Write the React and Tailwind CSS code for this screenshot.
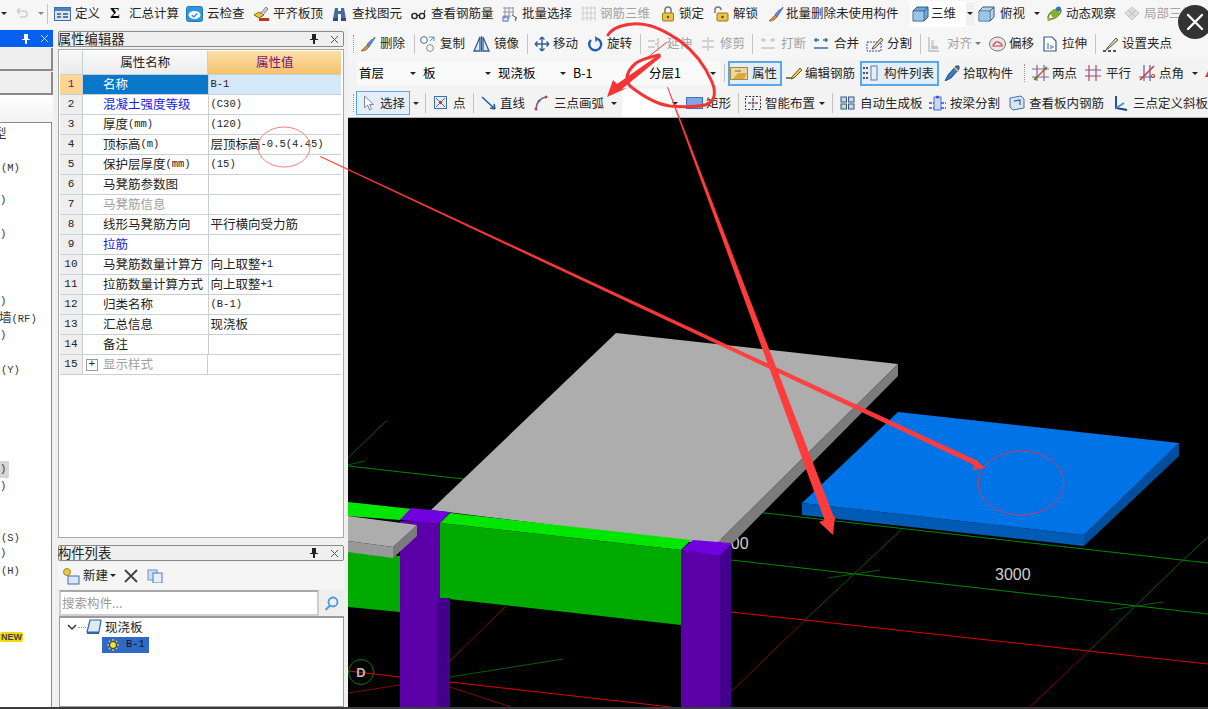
import React from "react";

const Ic = ({ children, w = 16, h = 16 }) => (
  <svg width={w} height={h} viewBox={`0 0 ${w} ${h}`} fill="none" className="block shrink-0">{children}</svg>
);
const Caret = ({ cls = "" }) => <span className={`shrink-0 w-0 h-0 border-l-[3px] border-r-[3px] border-t-[3px] border-l-transparent border-r-transparent border-t-[#222] ${cls}`} />;
const Sep = ({ w }) => <div className={`shrink-0 flex justify-start ${w}`}><div className="w-px h-[20px] bg-[#c4c4c4]" /></div>;
const Grip = ({ w }) => <div className={`shrink-0 ${w} h-[18px] border-l border-dotted border-[#999]`} />;

const T = ({ w, o, icon, label, gray, children }) => (
  <div className={`flex items-center shrink-0 whitespace-nowrap ${w}`}>
    <span className={`flex shrink-0 ${o}`}>{icon}</span>
    <span className={gray ? "text-[#a3a3a3]" : "text-[#262626]"}>{label}</span>
    {children}
  </div>
);

/* icons */
const Form = () => <Ic w={17}><rect x=".5" y="1.5" width="16" height="13" fill="#dbe6f2" stroke="#3f6fa8" /><rect x="1" y="2" width="15" height="3" fill="#4f83bd" /><path d="M3 8h4M9 8h5M3 11h4M9 11h5" stroke="#35557a" strokeWidth="1.6" /></Ic>;
const CloudChk = () => <Ic w={17}><rect x=".5" y=".5" width="16" height="15" rx="2" fill="#2f97dc" stroke="#1c78bb" /><ellipse cx="8.5" cy="9" rx="6" ry="4" fill="#fff" /><path d="M5.8 9l2 2 3.4-3.6" stroke="#2f97dc" strokeWidth="1.4" /></Ic>;
const Align = () => <Ic w={17}><path d="M1 9l5-3 5 3-5 3z" fill="#e9c23f" stroke="#8a6d10" /><path d="M8 7l5-6 2 2-5 6z" fill="#c9d3df" stroke="#77828f" /><rect x="6" y="12" width="10" height="3" fill="#b83a1d" /></Ic>;
const Binoc = () => <Ic w={17}><path d="M4 2h3v3h3V2h3l2 11h-5V8H7v5H2z" fill="#456c9e" /><rect x="2" y="12" width="5" height="3" fill="#2f4f7a" /><rect x="10" y="12" width="5" height="3" fill="#2f4f7a" /></Ic>;
const Glass = () => <Ic w={17}><circle cx="4.5" cy="10" r="2.6" stroke="#222" strokeWidth="1.4" /><circle cx="12" cy="10" r="2.6" stroke="#222" strokeWidth="1.4" /><path d="M7 9.5h2.5M14 8l1-4" stroke="#222" /></Ic>;
const Batch = () => <Ic w={17}><path d="M1 2h11M1 6h11M1 10h8M3 1v12M7 1v12M11 1v8" stroke="#8c96a6" /><rect x="1" y="11" width="5" height="4" stroke="#3c6fc4" /><path d="M10 9l5 3-2 1 1 2" stroke="#555" /></Ic>;
const Rebar3 = () => <Ic w={17}><path d="M1 2h15M1 7h15M1 12h15M3 0v15M7 0v15M11 0v15M15 0v15" stroke="#cfcfcf" /></Ic>;
const Lock = ({ open }) => <Ic><path d={open ? "M2 7V4a3 3 0 0 1 6 0" : "M5 7V4a3 3 0 0 1 6 0v3"} stroke="#777" strokeWidth="1.5" /><rect x={open ? 4 : 2.5} y="7" width="11" height="8" rx="1" fill="#e8c24a" stroke="#9b7b16" /><circle cx={open ? 9.5 : 8} cy="11" r="1.2" fill="#5a4508" /></Ic>;
const Brush = () => <Ic><path d="M15 1L7 9l2 2 6-9z" fill="#4b8fd6" stroke="#2b5f9c" strokeWidth=".6" /><path d="M7 9l2 2-3 3c-2 1-4 1-5 1 1-1 2-2 3-3z" fill="#cf8e48" stroke="#7a4f20" strokeWidth=".6" /><path d="M12 3l-5 5" stroke="#d46ad4" /></Ic>;
const Cube = ({ tint = "#6ea9d6" }) => <Ic w={17}><path d="M1 5l4-4h11v10l-4 4H1z" fill={tint} stroke="#2d5c85" /><path d="M1 5h11v10M12 5l4-4" stroke="#2d5c85" /><rect x="1.5" y="5.5" width="10" height="9" fill="#9dc6e6" /></Ic>;
const Orbit = () => <Ic w={17}><ellipse cx="8.5" cy="8" rx="7.5" ry="3.4" transform="rotate(-35 8.5 8)" stroke="#5d8a22" strokeWidth="1.5" /><circle cx="9" cy="7.5" r="4.2" fill="#7fb32e" /><circle cx="12.5" cy="3" r="2.5" fill="#3a6fc4" /><circle cx="3" cy="13.5" r="1.7" fill="#c2a52e" /></Ic>;
const Parts = () => <Ic w={17} ><path d="M8 1l7 6-7 7-7-7z" fill="#ddd" stroke="#c6c6c6" /><path d="M4.5 4l7 7M11.5 4l-7 7" stroke="#bbb" /></Ic>;
const Dup = () => <Ic w={17}><circle cx="5" cy="4" r="3.4" stroke="#4a6f9a" /><circle cx="11" cy="12" r="3.4" stroke="#8a8a8a" /><path d="M10 1l5 0v4M15 1l-4 4" stroke="#4a8fd6" /></Ic>;
const Mirror = () => <Ic w={17}><path d="M7 1L1 15h6zM10 1l6 14h-6z" stroke="#2f5f93" strokeWidth="1.3" fill="#dfe9f4" /><path d="M8.5 0v16" stroke="#555" /></Ic>;
const Move = () => <Ic><path d="M8 1v14M1 8h14M8 1L5.5 3.5M8 1l2.5 2.5M8 15l-2.5-2.5M8 15l2.5-2.5M1 8l2.5-2.5M1 8l2.5 2.5M15 8l-2.5-2.5M15 8l-2.5 2.5" stroke="#2b5f9c" strokeWidth="1.4" /></Ic>;
const Rot = () => <Ic><path d="M4 4a6 6 0 1 0 7-1" stroke="#1f5fb5" strokeWidth="2.4" /><path d="M8 0l4 3-3.5 3z" fill="#1f5fb5" /></Ic>;
const Ext = () => <Ic><path d="M1 5h7M1 11h7M11 2v12M8 8h3" stroke="#c5c5c5" strokeWidth="1.4" /></Ic>;
const Trim = () => <Ic><path d="M2 5h5M2 11h5M9 5h5M9 11h5M8 1v14" stroke="#c5c5c5" strokeWidth="1.4" /></Ic>;
const Brk = () => <Ic><path d="M1 4h5M10 4h5M1 12h14M3 2v4M13 2v4" stroke="#c5c5c5" strokeWidth="1.4" /></Ic>;
const Merge = () => <Ic><path d="M1 4h5M10 4h5M1 12h14M3 2v4M13 2v4" stroke="#2f6fb5" strokeWidth="1.4" /></Ic>;
const Split = () => <Ic w={17}><rect x="1" y="6" width="14" height="9" stroke="#2f4fd6" strokeDasharray="2 1" /><path d="M7 11l8-9 2 2-8 8-3 1z" fill="#e8d7a0" stroke="#555" /></Ic>;
const AlignL = () => <Ic w={12}><path d="M1 1v14h10" stroke="#bdbdbd" strokeWidth="1.4" /><rect x="3" y="4" width="3" height="8" fill="#d5d5d5" /><rect x="3" y="10" width="7" height="3" fill="#c5c5c5" /></Ic>;
const Offs = () => <Ic w={17}><ellipse cx="8.5" cy="8" rx="8" ry="7" fill="#e6e6e6" stroke="#777" /><path d="M4 10c0-3 2-2 3-4 2-1 3 1 4 1s2 2 2 3z" stroke="#d43b3b" strokeWidth="1.2" /></Ic>;
const Stretch = () => <Ic w={17}><path d="M2 1h8l4 4v10H2z" fill="#fff" stroke="#2f5f93" strokeWidth="1.2" /><path d="M6 7v6M9 9v4M12 11h-2" stroke="#2f5f93" /></Ic>;
const Pick = () => <Ic><path d="M14 2l-8 9-2 3 3-2 9-8z" fill="#e8d9a0" stroke="#555" /><path d="M1 15h3M6 15h3M11 15h3" stroke="#222" strokeWidth="1.5" /></Ic>;
const Prop = () => <Ic w={18}><rect x=".5" y="2.5" width="17" height="12" fill="#f0d79b" stroke="#a98b3f" /><path d="M3 14l5-6h9l-3 6z" fill="#d9a93e" /><path d="M5 6h6" stroke="#666" /></Ic>;
const Edit = () => <Ic w={17}><path d="M1 13h6" stroke="#555" strokeWidth="1.5" /><path d="M7 12l8-9 2 2-8 8-3 1z" fill="#eec94e" stroke="#6b5a1f" /></Ic>;
const List = () => <Ic w={16}><rect x="9" y="1" width="6" height="14" fill="#e6eef7" stroke="#5a7fa8" /><path d="M1 3h5M1 8h5M1 13h5" stroke="#555" strokeWidth="2" strokeDasharray="2 1" /></Ic>;
const Drop = () => <Ic w={17}><path d="M15 1l-3 0-8 9-3 6 6-3 8-9z" fill="#3b79c9" stroke="#234a85" /><path d="M10 2l5 5" stroke="#e8c24a" strokeWidth="1.5" /></Ic>;
const Two = () => <Ic w={17}><path d="M5 0v16M12 0v16M0 4h17M0 12h17" stroke="#7b6b9a" strokeWidth="1.2" /><path d="M2 15L15 2" stroke="#d43b3b" strokeWidth="1.2" /><circle cx="3.5" cy="13.5" r="1.5" fill="#2ea043" /><circle cx="13.5" cy="3.5" r="1.5" fill="#2ea043" /></Ic>;
const Para = () => <Ic w={16}><path d="M4 0v16M11 0v16" stroke="#c04a4a" strokeWidth="1.2" /><path d="M0 5h16M0 11h16" stroke="#6b5a9a" strokeWidth="1.2" /></Ic>;
const Ang = () => <Ic w={16}><path d="M5 0v16M11 0v16M0 12h16" stroke="#6b5a9a" strokeWidth="1.2" /><path d="M1 15L15 1" stroke="#d43b3b" strokeWidth="1.6" /><circle cx="14" cy="11" r="1.6" stroke="#d43b3b" /></Ic>;
const Cur = () => <Ic w={11}><path d="M1.5 1v12l3-3 2 5 2-1-2-4.500h4z" fill="#fff" stroke="#7d8a99" /></Ic>;
const Pt = () => <Ic w={13}><rect x=".5" y="1.500" width="12" height="12" fill="#e8eef6" stroke="#3f6fa8" /><path d="M2 3l9 9M11 3l-9 9" stroke="#3f6fa8" /><circle cx="6.500" cy="7.500" r="1.800" fill="#d43b3b" /></Ic>;
const Ln = () => <Ic><path d="M1 2l13 12M14 14l-5-1M14 14l-1-5" stroke="#2b5f9c" strokeWidth="1.6" /></Ic>;
const Arc = () => <Ic w={14}><path d="M2 14C2 8 6 3 12 2" stroke="#3f6fa8" strokeWidth="1.6" /><circle cx="2" cy="14" r="1.500" fill="#d43b3b" /><circle cx="12" cy="2" r="1.500" fill="#d43b3b" /><circle cx="5" cy="6" r="1.300" fill="#d43b3b" /></Ic>;
const Rect = () => <Ic w={17}><rect x=".5" y="2.500" width="16" height="11" fill="#7ea7e6" stroke="#3f6fc4" /></Ic>;
const Smart = () => <Ic w={17}><rect x=".5" y="1.500" width="15" height="13" stroke="#333" strokeDasharray="2 1.500" /><path d="M8 3v3M8 10v3M3 8h3M10 8h3" stroke="#3f6fa8" strokeWidth="1.500" /><circle cx="8" cy="8" r="1.500" fill="#d43b3b" /></Ic>;
const Auto = () => <Ic w={15}><rect x="1" y="2" width="5.500" height="5" fill="#c8d8ea" stroke="#34567d" /><rect x="8.500" y="2" width="5.500" height="5" fill="#c8d8ea" stroke="#34567d" /><rect x="1" y="9" width="5.500" height="5" fill="#c8d8ea" stroke="#34567d" /><rect x="8.500" y="9" width="5.500" height="5" fill="#c8d8ea" stroke="#34567d" /></Ic>;
const Beam = () => <Ic w={17}><path d="M0 8h17M0 13h17" stroke="#2f4fd6" strokeWidth="1.300" strokeDasharray="3 1" /><rect x="5" y="2" width="7" height="13" fill="#c8d8f2" stroke="#2f4fd6" strokeWidth=".8" /><circle cx="8.500" cy="2" r="1.500" fill="#2f4fd6" /></Ic>;
const View = () => <Ic w={16}><path d="M1 3l11-2 3 3v9l-11 2-3-3z" fill="#d7e5f2" stroke="#3f6fa8" /><path d="M5 6l6-1v5" stroke="#3f6fa8" strokeWidth="1.300" /></Ic>;
const Slope = () => <Ic w={15}><path d="M2 1v12l11 2" stroke="#173f8a" strokeWidth="1.800" /><path d="M2 13l8-5" stroke="#3b8fd6" strokeWidth="1.500" /></Ic>;

const Combo = ({ w, t, pl }) => (
  <div className={`flex items-center h-[24px] shrink-0 ${w}`}>
    <div className={`flex-1 h-full flex items-center ${pl}`}>{t}</div>
    <div className="w-[15px] h-full flex items-center justify-center"><Caret /></div>
  </div>
);

const Btn = ({ w, children }) => (
  <div className={`flex items-center shrink-0 h-[25px] border-2 border-[#5aa6e6] bg-[#e2eff9] ${w}`}>{children}</div>
);

const TopBar = () => (
  <div className="flex items-center h-[29px] pb-[2px] bg-[#f6f6f6] text-[12.5px] shrink-0">
    <div className="w-[14px] pl-[1px] flex"><Caret /></div>
    <div className="w-[22px] flex"><Ic w={14}><path d="M3 5h7a3 3 0 0 1 0 6H6M3 5l3-3M3 5l3 3" stroke="#cfcfcf" strokeWidth="1.500" /></Ic></div>
    <div className="w-[11px] pl-[2px] flex"><Caret cls="border-t-[#888]" /></div>
    <Sep w="w-[7px]" />
    <T w="w-[56px]" o="w-[21px]" icon={<Form />} label="定义" />
    <T w="w-[76px]" o="w-[19px]" icon={<span className="font-bold text-[15px] leading-none font-['Liberation_Serif',serif]">Σ</span>} label="汇总计算" />
    <T w="w-[67px]" o="w-[21px]" icon={<CloudChk />} label="云检查" />
    <T w="w-[78px]" o="w-[20px]" icon={<Align />} label="平齐板顶" />
    <T w="w-[79px]" o="w-[21px]" icon={<Binoc />} label="查找图元" />
    <T w="w-[92px]" o="w-[21px]" icon={<Glass />} label="查看钢筋量" />
    <T w="w-[78px]" o="w-[20px]" icon={<Batch />} label="批量选择" />
    <T w="w-[80px]" o="w-[20px]" icon={<Rebar3 />} label="钢筋三维" gray />
    <T w="w-[53px]" o="w-[19px]" icon={<Lock />} label="锁定" />
    <T w="w-[55px]" o="w-[20px]" icon={<Lock open />} label="解锁" />
    <T w="w-[142px]" o="w-[18px]" icon={<Brush />} label="批量删除未使用构件" />
    <div className="flex items-center w-[64px] h-[26px] bg-white shrink-0 pl-[2px]">
      <T w="w-[62px]" o="w-[19px]" icon={<Cube />} label="三维"><div className="ml-[10px] flex items-center justify-center w-[12px] h-[24px] bg-[#f0f0f0]"><Caret /></div></T>
    </div>
    <div className="w-[4px] shrink-0" />
    <T w="w-[68px]" o="w-[22px]" icon={<Cube tint="#b7d2e8" />} label="俯视"><Caret cls="ml-[9px]" /></T>
    <T w="w-[78px]" o="w-[20px]" icon={<Orbit />} label="动态观察" />
    <T w="w-[84px]" o="w-[20px]" icon={<Parts />} label="局部三维" gray />
  </div>
);

const Row2 = () => (
  <div className="flex items-center h-[31px] pl-[5px] pb-[2px] bg-[#f6f6f6] text-[12.5px] shrink-0">
    <Grip w="w-[7px]" />
    <T w="w-[54px]" o="w-[20px]" icon={<Brush />} label="删除" />
    <Sep w="w-[5px]" />
    <T w="w-[54px]" o="w-[21px]" icon={<Dup />} label="复制" />
    <T w="w-[54px]" o="w-[21px]" icon={<Mirror />} label="镜像" />
    <Sep w="w-[7px]" />
    <T w="w-[53px]" o="w-[19px]" icon={<Move />} label="移动" />
    <T w="w-[53px]" o="w-[20px]" icon={<Rot />} label="旋转" />
    <Sep w="w-[7px]" />
    <T w="w-[53px]" o="w-[20px]" icon={<Ext />} label="延伸" gray />
    <T w="w-[52px]" o="w-[20px]" icon={<Trim />} label="修剪" gray />
    <Sep w="w-[8px]" />
    <T w="w-[53px]" o="w-[21px]" icon={<Brk />} label="打断" gray />
    <T w="w-[53px]" o="w-[21px]" icon={<Merge />} label="合并" />
    <T w="w-[54px]" o="w-[21px]" icon={<Split />} label="分割" />
    <Sep w="w-[8px]" />
    <T w="w-[61px]" o="w-[19px]" icon={<AlignL />} label="对齐" gray><Caret cls="ml-[3px] border-t-[#777]" /></T>
    <T w="w-[53px]" o="w-[20px]" icon={<Offs />} label="偏移" />
    <T w="w-[53px]" o="w-[20px]" icon={<Stretch />} label="拉伸" />
    <Sep w="w-[7px]" />
    <T w="w-[76px]" o="w-[20px]" icon={<Pick />} label="设置夹点" />
  </div>
);

const Row3 = () => (
  <div className="flex items-center h-[29px] pl-[9px] pb-[3px] bg-[#f3f3f3] text-[12.5px] shrink-0">
    <div className="flex items-center bg-[#fafafa]">
      <Combo w="w-[63px]" t="首层" pl="pl-[2px]" />
      <Combo w="w-[75px]" t="板" pl="pl-[3px]" />
      <Combo w="w-[75px]" t="现浇板" pl="pl-[3px]" />
      <Combo w="w-[75px]" t="B-1" pl="pl-[3px]" />
      <Combo w="w-[75px]" t="分层1" pl="pl-[4px]" />
    </div>
    <div className="w-[8px] shrink-0 flex justify-start pl-[4px]"><div className="w-px h-[18px] bg-[#c4c4c4]" /></div>
    <Btn w="w-[54px]"><T w="w-[50px]" o="w-[22px]" icon={<Prop />} label="属性" /></Btn>
    <div className="w-[3px] shrink-0" />
    <T w="w-[75px]" o="w-[20px]" icon={<Edit />} label="编辑钢筋" />
    <Btn w="w-[79px]"><T w="w-[75px]" o="w-[22px]" icon={<List />} label="构件列表" /></Btn>
    <div className="w-[5px] shrink-0" />
    <T w="w-[75px]" o="w-[19px]" icon={<Drop />} label="拾取构件" />
    <div className="w-[13px] shrink-0 flex"><div className="ml-[5px] h-[18px] border-l border-dotted border-[#999]" /></div>
    <T w="w-[53px]" o="w-[20px]" icon={<Two />} label="两点" />
    <T w="w-[54px]" o="w-[21px]" icon={<Para />} label="平行" />
    <T w="w-[65px]" o="w-[20px]" icon={<Ang />} label="点角"><Caret cls="ml-[8px]" /></T>
    <Ic w={6}><path d="M1 12l4-8v8z" fill="#d43b3b" /></Ic>
  </div>
);

const Row4 = () => (
  <div className="flex items-center h-[28px] pl-[5px] bg-[#f3f3f3] text-[12.5px] shrink-0">
    <div className="w-[3px] shrink-0 h-[18px] border-l border-dotted border-[#999]" />
    <div className="flex items-center shrink-0 w-[54px] h-[24px] border border-[#5aa6e6] bg-[#e2eff9]">
      <T w="w-[52px]" o="w-[23px] pl-[6px]" icon={<Cur />} label="选择" />
    </div>
    <div className="w-[15px] shrink-0 pl-[3px] flex"><Caret /></div>
    <Sep w="w-[9px]" />
    <T w="w-[39px]" o="w-[19px]" icon={<Pt />} label="点" />
    <Sep w="w-[8px]" />
    <T w="w-[53px]" o="w-[19px]" icon={<Ln />} label="直线" />
    <T w="w-[88px]" o="w-[20px]" icon={<Arc />} label="三点画弧"><Caret cls="ml-[7px]" /></T>
    <div className="w-[50px] h-full bg-white shrink-0" />
    <div className="w-[14px] shrink-0 flex"><Caret /></div>
    <T w="w-[52px]" o="w-[20px]" icon={<Rect />} label="矩形" />
    <Sep w="w-[7px]" />
    <T w="w-[87px]" o="w-[20px]" icon={<Smart />} label="智能布置"><Caret cls="ml-[4px]" /></T>
    <Sep w="w-[8px]" />
    <T w="w-[89px]" o="w-[20px]" icon={<Auto />} label="自动生成板" />
    <T w="w-[80px]" o="w-[21px]" icon={<Beam />} label="按梁分割" />
    <T w="w-[105px]" o="w-[20px]" icon={<View />} label="查看板内钢筋" />
    <T w="w-[94px]" o="w-[19px]" icon={<Slope />} label="三点定义斜板" />
  </div>
);

const Scene = () => (
  <svg className="block w-full h-full bg-black" viewBox="348 118 860 589" preserveAspectRatio="none">
    {/* grid */}
    <g fill="none" strokeWidth="1">
      <path d="M348 466L1208 563M731 560L1208 614" stroke="#008a00" />
      <path d="M348 458L386 421M348 465L365 461M450 677L563 659M805 620L903 528M1088 652L1183 560L1208 537M828 578L880 570M1109 610L1163 602" stroke="#0b5c0b" />
      <path d="M731 612L1208 664M348 671L400 677M450 682L671 707" stroke="#e00000" />
      <path d="M348 693L400 685M450 687L511 707M450 661L506 606M731 692L805 620M1088 652L1030 707" stroke="#7a0a0a" />
    </g>
    <text x="713" y="549" fill="#cfcfcf" fontSize="16" fontFamily="Liberation Sans, sans-serif">3000</text>
    <text x="995" y="580" fill="#cfcfcf" fontSize="16" fontFamily="Liberation Sans, sans-serif">3000</text>
    {/* grey slab */}
    <polygon points="616,333 898,364 715,545 431,510" fill="#adadad" />
    <polygon points="898,364 898,376 731,545 715,545" fill="#7c7c7c" />
    {/* right beam */}
    <polygon points="450,513 691,540 681,550 440,523" fill="#00e600" />
    <polygon points="440,523 681,550 681,625 440,598" fill="#00aa00" />
    {/* left beam */}
    <polygon points="348,502 412,509 400,520 348,516" fill="#00e600" />
    <polygon points="348,550 400,556 400,612 348,607" fill="#00aa00" />
    {/* column 1 */}
    <rect x="400" y="521" width="38" height="186" fill="#5b00a8" />
    <rect x="437" y="523" width="3" height="75" fill="#5b00a8" />
    <rect x="437" y="598" width="13" height="109" fill="#43008c" />
    <polygon points="400,520 411,508 450,512 440,523" fill="#7000e0" />
    {/* small grey slab, in front of column 1 */}
    <polygon points="348,516 417,525 393,547 348,541" fill="#adadad" />
    <polygon points="348,541 393,547 393,558 348,552" fill="#999" />
    <polygon points="393,547 417,525 417,536 393,558" fill="#7c7c7c" />
    {/* column 2 */}
    <polygon points="681,550 720,556 720,707 681,707" fill="#5b00a8" />
    <polygon points="720,556 731,543 731,707 720,707" fill="#43008c" />
    <polygon points="681,550 693,540 731,543 720,556" fill="#7000e0" />
    {/* blue slab */}
    <polygon points="898,412 1179,443 1084,535 802,503" fill="#0073e6" />
    <polygon points="802,503 1084,535 1084,546 802,515" fill="#005bb5" />
    <polygon points="1179,443 1179,456 1084,546 1084,535" fill="#004f9f" />
    {/* axis bubble */}
    <circle cx="361" cy="672" r="12.500" fill="none" stroke="#0b7a0b" />
    <text x="361" y="677" textAnchor="middle" fill="#bbb" fontSize="13" fontWeight="bold" fontFamily="Liberation Sans, sans-serif">D</text>
  </svg>
);

function M({ children }) {
  return <span className="font-['Liberation_Mono',monospace] text-[10.5px]">{children}</span>;
}

const rows = [
  ["名称", <M>B-1</M>],
  ["混凝土强度等级", <M>(C30)</M>, "b"],
  [<>厚度<M>(mm)</M></>, <M>(120)</M>],
  [<>顶标高<M>(m)</M></>, <>层顶标高<M>-0.5(4.45)</M></>],
  [<>保护层厚度<M>(mm)</M></>, <M>(15)</M>],
  ["马凳筋参数图", ""],
  ["马凳筋信息", "", "g"],
  ["线形马凳筋方向", "平行横向受力筋"],
  ["拉筋", "", "b"],
  ["马凳筋数量计算方", <>向上取整<M>+1</M></>],
  ["拉筋数量计算方式", <>向上取整<M>+1</M></>],
  ["归类名称", <M>(B-1)</M>],
  ["汇总信息", "现浇板"],
  ["备注", ""],
  ["显示样式", "", "g"],
];

const PanelTitle = ({ t }) => (
  <div className="flex items-center h-[16px] bg-[#efefef] border border-[#8a8a8a] rounded-[2px] text-[13.3px] leading-none text-[#222] pr-[4px]">
    <span className="flex-1 -ml-[1px]">{t}</span>
    <Ic w={10} h={12}><path d="M3 1h4v5h2v1H6v4H4V7H1V6h2z" fill="#222" /></Ic>
    <span className="ml-[11px]"><Ic w={9} h={9}><path d="M1 1l7 7M8 1L1 8" stroke="#555" /></Ic></span>
  </div>
);

const PropTable = () => (
  <div className="flex-1 bg-white border border-[#a8a8a8] mt-[2px] p-[1px] pr-[2px] min-h-0">
    <div className="flex h-[24px] text-[12.5px] border-b border-[#c8d0d4]">
      <div className="w-[23px] bg-gradient-to-b from-[#f8f8f8] to-[#e9e9e9] border-r border-[#c8d0d4]" />
      <div className="w-[126px] flex items-center justify-center bg-gradient-to-b from-[#fafafa] to-[#ededed] border-r border-[#c8d0d4] text-[#222]">属性名称</div>
      <div className="w-[133px] flex items-center justify-center bg-gradient-to-b from-[#fbdfa6] to-[#f5c26f] text-[#7a1277]">属性值</div>
    </div>
    {rows.map(([n, v, k], i) => {
      const sel = i === 0;
      return (
        <div key={i} className="flex h-[20px] text-[12.5px] leading-none border-b border-[#c8d0d4] text-[#222]">
          <div className={`w-[23px] flex items-center justify-center border-r border-[#c8d0d4] font-['Liberation_Mono',monospace] text-[11px] ${sel ? "bg-[#fcd593] text-[#7a1277]" : "bg-[#eeeeee]"}`}>{i + 1}</div>
          <div className={`w-[126px] flex items-center whitespace-nowrap overflow-hidden border-r border-[#c8d0d4] ${i === 14 ? "pl-[3px]" : "pl-[20px]"} ${sel ? "bg-[#0a78c8] text-white" : k === "b" ? "text-[#1a1ae6]" : k === "g" ? "text-[#a0a0a0]" : ""}`}>
            {i === 14 && <span className="flex items-center justify-center w-[12px] h-[12px] border border-[#999] mr-[5px] text-[11px] text-[#222] font-['Liberation_Mono',monospace]">+</span>}
            {n}
          </div>
          <div className={`w-[133px] flex items-center pl-[2px] whitespace-nowrap ${sel ? "bg-[#d5e8f8]" : ""}`}>{v}</div>
        </div>
      );
    })}
  </div>
);

const CompList = () => (
  <div className="flex flex-col h-[162px] shrink-0">
    <PanelTitle t="构件列表" />
    <div className="flex items-center h-[27px] mt-[1px] bg-[#f5f5f5] text-[12.5px] text-[#222] pl-[4px]">
      <Ic w={18} h={18}><circle cx="5" cy="5" r="3.500" fill="#e5c84a" stroke="#a08a20" /><rect x="6" y="9" width="11" height="8" fill="#dbe6f2" stroke="#3f6fa8" /></Ic>
      <span className="ml-[3px]">新建</span>
      <Caret cls="ml-[2px]" />
      <span className="ml-[8px]"><Ic w={14} h={14}><path d="M1 1l12 12M13 1L1 13" stroke="#444" strokeWidth="1.800" /></Ic></span>
      <span className="ml-[9px]"><Ic w={17} h={14}><rect x="1" y="1" width="9" height="10" fill="#cfdff2" stroke="#6f93bd" /><rect x="6" y="4" width="9" height="10" fill="#e6effa" stroke="#4f78ab" /></Ic></span>
    </div>
    <div className="flex h-[26px] mt-[1px]">
      <div className="flex-1 flex items-center bg-white border-2 border-[#cfcfcf] border-t-[#a8a8a8] text-[12.5px] text-[#9a9a9a] pl-[1px] ml-[1px]">搜索构件...</div>
      <div className="w-[25px] flex items-center justify-center bg-[#eeeeee]"><Ic w={15} h={15}><circle cx="9" cy="6" r="4.500" stroke="#4a9ade" strokeWidth="1.800" /><path d="M6 9.500L1.500 14" stroke="#4a9ade" strokeWidth="2" /></Ic></div>
    </div>
    <div className="flex-1 bg-white border border-[#9a9a9a] border-t-2 ml-[1px] text-[12.5px] text-[#222]">
      <div className="flex items-center h-[18px] pl-[7px]">
        <Ic w={10} h={8}><path d="M1 2l4 4 4-4" stroke="#333" strokeWidth="1.500" /></Ic>
        <span className="w-[8px] ml-[1px] border-t border-dotted border-[#999]" />
        <Ic w={16} h={16}><path d="M4 1h11l-2 12H1z" fill="#dce9f7" stroke="#2f62a8" strokeWidth="1.200" /><path d="M1 13h12v2H1z" fill="#2f62a8" /></Ic>
        <span className="ml-[3px]">现浇板</span>
      </div>
      <div className="flex items-center h-[17px] pl-[42px]">
        <div className="flex items-center w-[47px] h-[16px] bg-[#316ac5] pl-[5px]">
          <Ic w={12} h={12}><circle cx="6" cy="6" r="3.500" fill="#f4e23c" stroke="#333" /><path d="M6 0v2M6 10v2M0 6h2M10 6h2M2 2l1 1M9 9l1 1M10 2L9 3M2 10l1-1" stroke="#f4e23c" strokeWidth="1.200" /></Ic>
          <span className="ml-[7px] font-['Liberation_Mono',monospace] text-[10.5px] text-[#111]">B-1</span>
        </div>
      </div>
    </div>
  </div>
);

const leftRows = {
  0: <span className="-ml-[6px]">型</span>,
  2: <span className="ml-[1px]"><M>(M)</M></span>,
  4: <M>)</M>,
  6: <M>)</M>,
  10: <M>)</M>,
  11: <span className="-ml-[1px]">墙<M>(RF)</M></span>,
  12: <M>)</M>,
  14: <span className="ml-[1px]"><M>(Y)</M></span>,
  20: <M>)</M>,
  21: <M>)</M>,
  24: <span className="ml-[1px]"><M>(S)</M></span>,
  25: <M>)</M>,
  26: <span className="ml-[1px]"><M>(H)</M></span>,
};

const LeftPanel = () => (
  <div className="flex flex-col w-[53px] shrink-0 bg-[#f0f0f0] pt-[1px]">
    <div className="flex items-center justify-end h-[17px] bg-[#0560f0] pr-[4px] shrink-0">
      <Ic w={10} h={12}><path d="M3 1h4v5h2v1H6v4H4V7H1V6h2z" fill="#fff" /></Ic>
      <span className="ml-[9px]"><Ic w={9} h={9}><path d="M1 1l7 7M8 1L1 8" stroke="#cfe0ff" /></Ic></span>
    </div>
    <div className="h-[23px] mt-[1px] bg-[#efefef] border-r-2 border-b-2 border-[#8a8a8a] shrink-0" />
    <div className="h-[23px] mt-[1px] bg-[#efefef] border-r-2 border-b-2 border-[#8a8a8a] shrink-0" />
    <div className="h-[27px] bg-gradient-to-b from-white to-[#f2f2f2] shrink-0" />
    <div className="flex-1 bg-white border-t border-r border-[#8a8a8a] overflow-hidden pt-[2px] mr-[1px] text-[12.5px] leading-none text-[#333]">
      {Array.from({ length: 30 }, (_, i) => (
        <div key={i} className={`h-[16.8px] flex items-center whitespace-nowrap ${i === 20 ? "bg-[#d6d6d6] w-[9px]" : ""}`}>
          {leftRows[i]}
        </div>
      ))}
      <div className="h-[16.8px] flex items-center">
        <span className="bg-[#f5d90a] text-[9px] leading-[10px] font-bold text-[#444] font-['Liberation_Sans',sans-serif] px-px rounded-[2px]">NEW</span>
      </div>
    </div>
  </div>
);

const Overlay = () => (
  <svg className="absolute left-0 top-0 pointer-events-none" width="1208" height="709" viewBox="0 0 1208 709" fill="none">
    <path d="M608 35C612 28 625 23 640 24C655 25 668 33 680 41C695 52 706 68 712 82C717 94 714 103 705 105C695 107 680 107 670 106C655 104 640 94 630 86C624 78 628 70 636 63C644 58 652 57 659 55" stroke="#f53535" strokeWidth="3" strokeLinecap="round" />
    <path d="M667 42L648 57" stroke="#f53535" strokeWidth="1" />
    <polygon points="660,54 661,57 622,89 627,88 607,97 613,80 617,84" fill="#f53535" />
    <polygon points="667,87 668,87 835,520 826,524" fill="#ff3b3b" />
    <polygon points="833,535 819,522 835,516" fill="#ff3b3b" />
    <ellipse cx="284" cy="147" rx="26" ry="20" stroke="#f08080" strokeWidth="1" />
    <polygon points="320,157 320.500,156 978,461 976,466" fill="#ff3b3b" opacity=".95" />
    <polygon points="985,468 976,460 973,470" fill="#ff3b3b" />
    <ellipse cx="1021" cy="483" rx="43" ry="32" stroke="#c8405c" strokeWidth="1" />
  </svg>
);

export default function App() {
  return (
    <div className="relative w-[1208px] h-[709px] overflow-hidden flex flex-col bg-[#f0f0f0] font-['Noto_Sans_CJK_SC','Noto_Sans',sans-serif]">
      <TopBar />
      <div className="flex flex-1 min-h-0">
        <LeftPanel />
        <div className="flex flex-col w-[295px] shrink-0 pl-[5px] pr-[4px] pt-[2px] bg-[#f0f0f0]">
          <PanelTitle t="属性编辑器" />
          <PropTable />
          <div className="h-[7px] shrink-0" />
          <CompList />
        </div>
        <div className="flex flex-col flex-1 min-w-0">
          <Row2 />
          <Row3 />
          <Row4 />
          <div className="h-px bg-[#b5b5b5] shrink-0" />
          <div className="flex-1 min-h-0"><Scene /></div>
        </div>
      </div>
      <div className="h-[2px] bg-[#3c3c3c] shrink-0" />
      <Overlay />
      <div className="absolute left-[1178px] top-[5px] w-[34px] h-[34px] rounded-full bg-[#333] flex items-center justify-center">
        <Ic w={18} h={18}><path d="M2 2l14 14M16 2L2 16" stroke="#fff" strokeWidth="2.400" strokeLinecap="round" /></Ic>
      </div>
    </div>
  );
}
